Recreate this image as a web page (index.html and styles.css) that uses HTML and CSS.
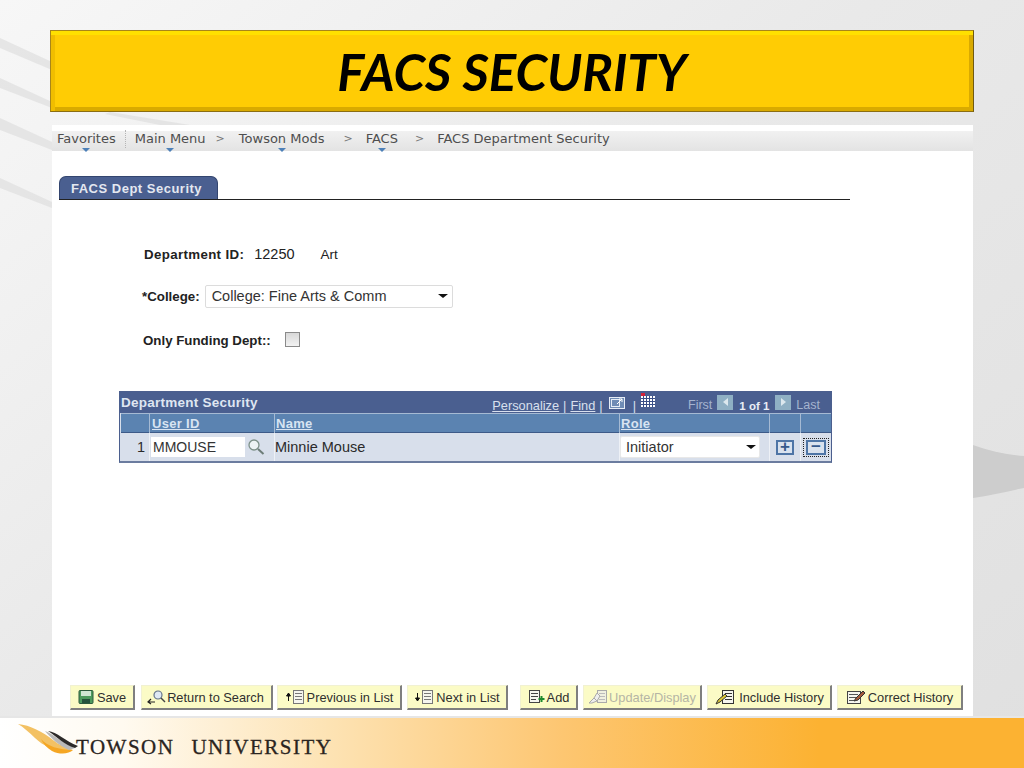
FILE: index.html
```html
<!DOCTYPE html>
<html lang="en">
<head>
<meta charset="utf-8">
<title>FACS Security</title>
<link rel="stylesheet" href="styles.css">
</head>
<body>
<div class="slide">
  <svg class="bg-art" width="1024" height="768" viewBox="0 0 1024 768" aria-hidden="true">
    <g fill="#dcdcdc" opacity=".6">
      <path d="M0 38 L52 62 V70 L0 48Z"/>
      <path d="M0 78 L52 102 V108 L0 88Z"/>
      <path d="M0 118 L52 142 V150 L0 130Z"/>
      <path d="M0 178 L52 202 V208 L0 188Z"/>
      <path d="M110 112 L190 125 H160 L105 114Z"/>
    </g>
    <path d="M973 445 C990 451 1008 455 1024 456 V488 C1008 491 990 496 973 498Z" fill="#cdcdcd"/>
  </svg>

  <header class="banner"><h1>FACS SECURITY</h1></header>

  <main class="panel">
    <nav class="crumbs">
      <span class="crumb">Favorites</span><span class="crumb-sep"></span>
      <span class="crumb">Main Menu</span><span class="gt gt-1">&gt;</span>
      <span class="crumb">Towson Mods</span><span class="gt gt-2">&gt;</span>
      <span class="crumb">FACS</span><span class="gt gt-3">&gt;</span>
      <span>FACS Department Security</span>
    </nav>

    <div class="tabs"><span class="tab">FACS Dept Security</span></div>

    <section class="form">
      <div class="row row-dept"><b>Department ID:</b><span class="dept-id">12250</span><span>Art</span></div>
      <div class="row row-college"><b>*College:</b>
        <span class="select select-college">College: Fine Arts &amp; Comm<i class="caret"></i></span>
      </div>
      <div class="row row-fund"><b>Only Funding Dept::</b><span class="check"></span></div>
    </section>

    <section class="grid">
      <div class="grid-title">
        <span class="grid-name">Department Security</span>
        <span class="grid-tools">
          <a>Personalize</a><span>|</span><a>Find</a><span>|</span>
          <svg class="ico-zoom" width="18" height="15" viewBox="0 0 18 15"><rect x=".5" y="2.500" width="15" height="11" fill="#6f8cb5" stroke="#e6edf6"/><rect x="2.500" y="4.500" width="8" height="7" fill="none" stroke="#e6edf6"/><path d="M8 9 L13 4 M10 4h3v3" stroke="#fff" fill="none"/></svg>
          <span>|</span>
          <svg class="ico-cal" width="16" height="15" viewBox="0 0 16 15"><rect x="1" y="0" width="4" height="3" fill="#d3233a"/><rect x="1" y="3" width="14" height="11" fill="#fff"/><path d="M1 5.500H15M1 8.500H15M1 11.500H15M3.500 3V14M6.500 3V14M9.500 3V14M12.500 3V14" stroke="#3a4f86"/></svg>
        </span>
        <span class="grid-pager">
          <span>First</span>
          <span class="pg pg-first"><i class="tri-l"></i></span>
          <b>1 of 1</b>
          <span class="pg pg-last"><i class="tri-r"></i></span>
          <span>Last</span>
        </span>
      </div>
      <div class="cols head">
        <span></span><a>User ID</a><a>Name</a><a>Role</a><span></span><span></span>
      </div>
      <div class="cols body">
        <span class="num">1</span>
        <span class="uid"><span class="input">MMOUSE</span>
          <svg width="18" height="18" viewBox="0 0 18 18"><circle cx="7" cy="7" r="5" fill="#eef3f5" stroke="#7d9088" stroke-width="1.300"/><path d="M11 11 L16.500 16" stroke="#6d7d78" stroke-width="2"/></svg>
        </span>
        <span class="name">Minnie Mouse</span>
        <span class="role"><span class="select select-role">Initiator<i class="caret"></i></span></span>
        <span class="act"><i class="btn-sq">+</i></span>
        <span class="act"><span class="focus"><i class="btn-sq btn-wide">&minus;</i></span></span>
      </div>
    </section>

    <div class="toolbar">
      <span class="tb tb-save"><svg width="16" height="14" viewBox="0 0 16 14"><rect x="1" y="0.500" width="14" height="13" rx="1" fill="#4d9a5d" stroke="#2c5a3c"/><rect x="3" y="1" width="10" height="5" fill="#cfe6d2"/><rect x="4" y="9" width="8" height="4" fill="#24513a"/></svg>Save</span>
      <span class="tb tb-ret"><svg width="20" height="15" viewBox="0 0 20 15"><circle cx="12" cy="5" r="4" fill="#dfe9f4" stroke="#64748a" stroke-width="1.200"/><path d="M15 8l4 4" stroke="#444" stroke-width="1.500"/><path d="M9 12H2M5 9l-3 3 3 2" stroke="#222" fill="none" stroke-width="1.200"/></svg>Return to Search</span>
      <span class="tb tb-prev"><svg width="20" height="14" viewBox="0 0 20 14"><path d="M3.500 11V4M1.500 6l2-3 2 3z" stroke="#111" fill="#111"/><rect x="8.500" y="0.500" width="10" height="13" fill="#f5f5ee" stroke="#777"/><path d="M10 3.500h7M10 6.500h7M10 9.500h7" stroke="#777"/></svg>Previous in List</span>
      <span class="tb tb-next"><svg width="20" height="14" viewBox="0 0 20 14"><path d="M3.500 3v7M1.500 8l2 3 2-3z" stroke="#111" fill="#111"/><rect x="8.500" y="0.500" width="10" height="13" fill="#f5f5ee" stroke="#777"/><path d="M10 3.500h7M10 6.500h7M10 9.500h7" stroke="#777"/></svg>Next in List</span>
      <span class="tb tb-add"><svg width="18" height="14" viewBox="0 0 18 14"><rect x="1.500" y="0.500" width="10" height="12" fill="#f5f5ee" stroke="#444"/><path d="M3 3.500h7M3 6.500h7M3 9.500h5" stroke="#444"/><path d="M13.500 6v6M10.500 9h6" stroke="#1d8a2e" stroke-width="2"/></svg>Add</span>
      <span class="tb tb-upd is-off"><svg width="20" height="14" viewBox="0 0 20 14"><rect x="9.500" y="0.500" width="9" height="12" fill="#f0f0e0" stroke="#aaa"/><path d="M11 3.500h6M11 6.500h6M11 9.500h6" stroke="#bbb"/><path d="M1 13l5-5 3 3-5 2zM6 8l3-5 3 3-3 5z" fill="#eee" stroke="#aaa"/></svg>Update/Display</span>
      <span class="tb tb-inc"><svg width="22" height="15" viewBox="0 0 22 15"><rect x="8.500" y="0.500" width="11" height="13" fill="#f5f5ee" stroke="#333"/><path d="M11 3.500h7M11 6.500h7M11 9.500h7" stroke="#333"/><path d="M2 14l2-4 7-6 2 2-7 6z" fill="#d9c636" stroke="#333"/></svg>Include History</span>
      <span class="tb tb-cor"><svg width="20" height="14" viewBox="0 0 20 14"><rect x="1.500" y="1.500" width="13" height="12" fill="#f5f5ee" stroke="#444"/><path d="M3 4.500h9M3 7.500h7M3 10.500h5" stroke="#555"/><path d="M8 11l2-3 7-7 2 2-7 7z" fill="#a45a3a" stroke="#333"/></svg>Correct History</span>
    </div>
  </main>

  <footer class="footer">
    <svg class="swoosh" width="64" height="40" viewBox="0 0 64 40"><path d="M3 2 C15 3 28 10 38 18 C44 23 52 26 58 28 C46 31 30 26 20 16 C14 10 8 5 3 2Z" fill="#f3c163"/><path d="M26 17 C32 24 44 28 58 28 C54 32 45 33 37 29 C32 26 28 22 26 17Z" fill="#f5a623"/><path d="M30 9 C38 12 46 20 60 26 L54 28 C44 24 36 16 30 9Z" fill="#b9b9b9"/><path d="M33 9 C42 10 50 19 63 24 L60 26 C50 23 42 15 33 9Z" fill="#2c2a29"/></svg>
    <span class="wordmark"><span>TOWSON</span><span>UNIVERSITY</span></span>
  </footer>
</div>
</body>
</html>
```
FILE: styles.css
```css
* { box-sizing: border-box; }
html, body { margin: 0; padding: 0; }
body { width: 1024px; height: 768px; overflow: hidden; font-family: "Liberation Sans", Arial, sans-serif; }

.slide {
  position: relative;
  width: 1024px;
  height: 768px;
  display: flex;
  flex-direction: column;
  background: linear-gradient(140deg, #f7f7f7 0%, #e9e9e9 45%, #e0e0e0 100%);
}
.bg-art { position: absolute; left: 0; top: 0; }

.banner {
  position: relative;
  margin: 30px 50px 0 50px;
  height: 82px;
  display: flex;
  align-items: center;
  justify-content: center;
  background: #ffcc04;
  border: 1px solid #a8851a;
  border-right-color: #6f5a12;
  border-bottom-color: #8a6d12;
  box-shadow: inset 0 4px 0 #ffe000, inset 4px 0 0 #f0bd00, inset -4px 0 0 #d9aa00, inset 0 -4px 0 #d9aa00;
}
.banner h1 {
  margin: 0;
  font: italic 700 51px/1 Lato, "Liberation Sans", sans-serif;
  color: #000;
}

.panel {
  position: relative;
  margin: 13px 51px 0 52px;
  height: 591px;
  background: #fff;
  padding-top: 6px;
  display: flex;
  flex-direction: column;
}

.crumbs {
  height: 20px;
  background: linear-gradient(#f1f1f1, #e3e3e3);
  display: flex;
  align-items: center;
  padding: 0 0 5px 5px;
  font: 13px "DejaVu Sans", Verdana, sans-serif;
  color: #4e4e4e;
}
.crumb { position: relative; }
.crumb::after {
  content: "";
  position: absolute;
  left: 50%;
  bottom: -6px;
  margin-left: -4px;
  border: 4px solid transparent;
  border-top: 4px solid #4d80b8;
  border-bottom-width: 0;
}
.crumb-sep { width: 0; height: 18px; border-left: 1px dotted #b5b5b5; margin: 0 9px 0 9px; }
.gt { color: #777; font-size: 11px; }
.gt-1 { margin: 0 14px 0 10px; }
.gt-2 { margin: 0 13px 0 19px; }
.gt-3 { margin: 0 13px 0 17px; }

.tabs {
  margin: 25px 0 0 7px;
  width: 791px;
  height: 24px;
  border-bottom: 1px solid #222;
}
.tab {
  display: block;
  width: 159px;
  height: 23px;
  background: #4a5f90;
  border: 1px solid #33456f;
  border-bottom: 0;
  border-radius: 7px 7px 0 0;
  padding: 5px 0 0 11px;
  font: 700 13px/14px "Liberation Sans", sans-serif;
  letter-spacing: .5px;
  color: #e4e8f0;
}

.form { font-size: 14.500px; color: #222; }
.form b { font-weight: 700; font-size: 13.300px; }
.row { display: flex; align-items: center; }
.row-dept { margin: 45px 0 0 92px; height: 18px; }
.row-dept b { letter-spacing: .35px; }
.dept-id { margin: 0 26px 0 10px; }
.dept-id + span { font-size: 13.500px; }
.row-college { margin: 21px 0 0 90px; height: 24px; }
.row-fund { margin: 23px 0 0 91px; height: 18px; }
.check {
  width: 15px; height: 15px; margin: -2px 0 0 14px;
  background: linear-gradient(#d8d8d8, #f2f2f2);
  border: 1px solid #8a8a8a;
}

.select {
  position: relative;
  display: flex;
  align-items: center;
  background: #fff;
  border: 1px solid #dcdcdc;
  border-radius: 2px;
  color: #333;
}
.select-college { width: 248px; height: 23px; margin-left: 5px; padding-left: 6px; font-size: 14.500px; }
.caret { position: absolute; right: 5px; top: 50%; margin-top: -2px; border: 5px solid transparent; border-top: 4px solid #111; border-bottom: 0; }
.select-college .caret { right: 4px; }

.grid {
  margin: 42px 0 0 67px;
  width: 713px;
  height: 72px;
  background: #d8dfeb;
  border: 1px solid #4b5f8e;
  border-bottom: 2px solid #6b7c9f;
  display: flex;
  flex-direction: column;
  font-size: 14.500px;
}
.grid-title {
  position: relative;
  height: 21px;
  flex: none;
  background: #4a5f90;
  color: #dfe6f1;
  display: flex;
  align-items: center;
  white-space: nowrap;
}
.grid-name { flex: none; font-weight: 700; font-size: 13.500px; padding-left: 1px; letter-spacing: .25px; margin-top: -1px; }
.grid-tools { margin: 5px 29px 0 auto; display: flex; align-items: center; gap: 4px; font-size: 12.800px; color: #d8e0ee; }
.grid-tools a { text-decoration: underline; }
.ico-zoom { margin: -6px 2px 0 2px; }
.ico-cal { margin: -9px 0 0 0; }
.grid-pager { flex: none; width: 146px; padding-right: 11px; display: flex; justify-content: flex-end; align-items: center; font-size: 12.500px; margin-top: 5px; color: #a5b4cf; }
.grid-pager b { color: #e8edf5; font-size: 11.500px; margin: 1px 6px 0 6px; }
.pg { width: 16px; height: 15px; background: #8fb0c4; display: flex; align-items: center; justify-content: center; margin-top: -6px; }
.pg-first { margin-left: 5px; }
.pg-last { margin-right: 5px; }
.tri-l { border: 4px solid transparent; border-right: 5px solid #dce8ee; border-left: 0; }
.tri-r { border: 4px solid transparent; border-left: 5px solid #dce8ee; border-right: 0; }

.cols {
  display: grid;
  grid-template-columns: 28px 125px 345px 150px 31px 31px;
}
.head {
  height: 20px;
  flex: none;
  margin: 0 0 0 1px;
  background: #5b83b1;
  border-top: 1px solid #a6bad3;
  border-bottom: 1px solid #3d5a88;
  font-weight: 700;
  font-size: 13px;
  line-height: 19px;
  color: #d8e4f2;
}
.head > * { border-left: 1px solid #a6bad3; padding-left: 1px; }
.head > *:first-child { border-left: 0; }
.head a { text-decoration: underline; letter-spacing: .3px; }
.head a:first-of-type { padding-left: 2px; }
.body { flex: 1; align-items: center; color: #2a2a2a; margin-left: 1px; }
.body > * { height: 100%; display: flex; align-items: center; }
.num { justify-content: flex-end; padding-right: 4px; }
.uid { gap: 2px; border-left: 1px solid #eef1f6; }
.input { width: 94px; height: 20px; margin-left: 1px; padding-left: 2px; background: #fff; display: flex; align-items: center; color: #333; font-size: 14px; }
.name { padding-left: 0; border-left: 1px solid #eef1f6; }
.role { padding-left: 0; border-left: 1px solid #eef1f6; }
.select-role { width: 140px; height: 22px; padding-left: 5px; border-color: #e8e8e8; font-size: 14.500px; }
.select-role .caret { right: 3px; }
.act { justify-content: center; border-left: 1px solid #eef1f6; }
.btn-sq {
  display: block;
  width: 18px; height: 15px;
  background: #d9e2ee;
  border: 2px solid #4e75a6;
  color: #35598c;
  font: 700 17px/10px "Liberation Sans", sans-serif;
  text-align: center;
}
.focus { border: 1px dotted #222; padding: 1px 2px; display: block; }
.btn-wide { width: 20px; }

.toolbar {
  position: absolute;
  left: 18px;
  top: 560px;
  display: flex;
  font-size: 12.800px;
  color: #2f2f2f;
}
.tb {
  height: 25px;
  display: flex;
  align-items: center;
  justify-content: center;
  gap: 3px;
  background: #fbfbc6;
  border: 1px solid #f1f1d2;
  border-right: 2px solid #7f7f7f;
  border-bottom: 2px solid #7f7f7f;
  white-space: nowrap;
}
.tb-save { width: 65px; margin-right: 6px; }
.tb-ret { width: 132px; margin-right: 4px; gap: 1px; padding-right: 3px; }
.tb-prev { width: 125px; margin-right: 5px; gap: 2px; }
.tb-next { width: 101px; margin-right: 12px; gap: 2px; }
.tb-add { width: 58px; margin-right: 5px; gap: 1px; }
.tb-upd { width: 119px; margin-right: 5px; gap: 1px; color: #b5b5a5; }
.tb-inc { width: 125px; margin-right: 5px; }
.tb-cor { width: 126px; gap: 2px; }

.footer {
  position: relative;
  flex: 1;
  border-top: 2px solid #e6e6e6;
  background: linear-gradient(90deg, #fff 0%, #fffaf0 12%, #fde3b4 32%, #fdc671 55%, #fcb232 80%, #fcb232 100%);
  display: flex;
  align-items: center;
  padding-left: 76px;
}
.swoosh { position: absolute; left: 15px; top: 4px; }
.wordmark {
  display: flex;
  gap: 17px;
  font: 400 21px/1 "Liberation Serif", serif;
  letter-spacing: 1.500px;
  color: #2a2420;
  -webkit-text-stroke: .3px #2a2420;
  margin-top: 8px;
}
```
